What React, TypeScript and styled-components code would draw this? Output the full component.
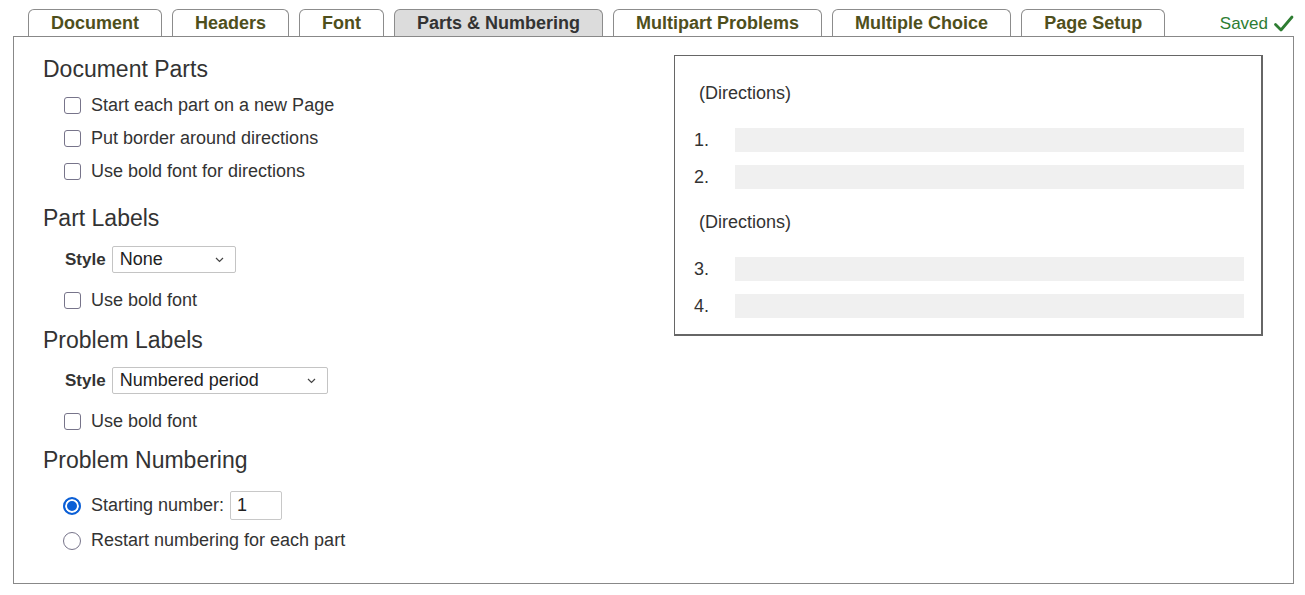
import styled, { createGlobalStyle } from 'styled-components';

const TABS = [
  'Document',
  'Headers',
  'Font',
  'Parts & Numbering',
  'Multipart Problems',
  'Multiple Choice',
  'Page Setup',
];
const ACTIVE_TAB = 'Parts & Numbering';

const PREVIEW = [
  { directions: '(Directions)', items: ['1.', '2.'] },
  { directions: '(Directions)', items: ['3.', '4.'] },
];

const GlobalStyle = createGlobalStyle`
  body {
    margin: 0;
    background: #fff;
    font-family: "Liberation Sans", Arial, sans-serif;
    color: #333;
  }
`;

const App = () => (
  <>
    <GlobalStyle />
    <Page>
      <TabBar>
        {TABS.map((tab) => (
          <Tab key={tab} $active={tab === ACTIVE_TAB}>
            {tab}
          </Tab>
        ))}
        <Saved>
          Saved
          <svg width="21" height="19" viewBox="0 0 21 19">
            <path d="M2.5 10.5 L8 16 L19 3" fill="none" stroke="#2e7d32" strokeWidth="2.8" strokeLinecap="round" strokeLinejoin="round" />
          </svg>
        </Saved>
      </TabBar>
      <Panel>
        <Settings>
          <Heading>Document Parts</Heading>
          <CheckRow>
            <Checkbox type="checkbox" />
            Start each part on a new Page
          </CheckRow>
          <CheckRow>
            <Checkbox type="checkbox" />
            Put border around directions
          </CheckRow>
          <CheckRow>
            <Checkbox type="checkbox" />
            Use bold font for directions
          </CheckRow>

          <Heading $top={15} $bottom={10}>Part Labels</Heading>
          <FieldRow>
            <FieldLabel>Style</FieldLabel>
            <Select $width={124}>
              <span>None</span>
              <Chevron />
            </Select>
          </FieldRow>
          <CheckRow>
            <Checkbox type="checkbox" />
            Use bold font
          </CheckRow>

          <Heading $top={8} $bottom={9}>Problem Labels</Heading>
          <FieldRow>
            <FieldLabel>Style</FieldLabel>
            <Select $width={216}>
              <span>Numbered period</span>
              <Chevron />
            </Select>
          </FieldRow>
          <CheckRow>
            <Checkbox type="checkbox" />
            Use bold font
          </CheckRow>

          <Heading $top={7} $bottom={13}>Problem Numbering</Heading>
          <RadioRow>
            <Radio type="radio" name="numbering" defaultChecked />
            Starting number:
            <NumberInput defaultValue="1" />
          </RadioRow>
          <RadioRow>
            <Radio type="radio" name="numbering" />
            Restart numbering for each part
          </RadioRow>
        </Settings>

        <Preview>
          {PREVIEW.map((part, i) => (
            <PreviewPart key={i} $first={i === 0}>
              <Directions>{part.directions}</Directions>
              {part.items.map((n) => (
                <ProblemLine key={n}>
                  <ProblemNumber>{n}</ProblemNumber>
                  <ProblemBar />
                </ProblemLine>
              ))}
            </PreviewPart>
          ))}
        </Preview>
      </Panel>
    </Page>
  </>
);
export default App;

const Chevron = () => (
  <svg width="9" height="6" viewBox="0 0 9 6">
    <path d="M1 1 L4.5 4.5 L8 1" fill="none" stroke="#444" strokeWidth="1.2" />
  </svg>
);

const Page = styled.div`
  padding: 9px 11px 0 13px;
  width: 1281px;
`;

const TabBar = styled.div`
  display: flex;
  align-items: flex-end;
  gap: 10px;
  padding-left: 15px;
  height: 27px;
`;

const Tab = styled.div<{ $active?: boolean }>`
  height: 26px;
  padding: 0 22px;
  display: flex;
  align-items: center;
  border: 1px solid #8c8c8c;
  border-bottom: none;
  border-radius: 6px 6px 0 0;
  background: ${({ $active }) => ($active ? '#dcdcdc' : '#fff')};
  color: ${({ $active }) => ($active ? '#333' : '#4f4f1c')};
  font-size: 18px;
  font-weight: 700;
  white-space: nowrap;
`;

const Saved = styled.div`
  margin-left: auto;
  align-self: center;
  display: flex;
  align-items: center;
  gap: 5px;
  color: #2e7d32;
  font-size: 17px;
  margin-top: 2px;
`;

const Panel = styled.div`
  display: flex;
  border: 1px solid #888;
  box-sizing: border-box;
  height: 548px;
`;

const Settings = styled.div`
  width: 631px;
  padding: 17px 0 0 29px;
`;

const Heading = styled.h2<{ $top?: number; $bottom?: number }>`
  margin: ${({ $top = 0 }) => $top}px 0 ${({ $bottom = 5 }) => $bottom}px;
  height: 30px;
  line-height: 30px;
  font-size: 23px;
  font-weight: 400;
  color: #333;
`;

const CheckRow = styled.label`
  display: flex;
  align-items: center;
  gap: 10px;
  height: 33px;
  padding-left: 21px;
  font-size: 18px;
  color: #333;
`;

const Checkbox = styled.input`
  appearance: none;
  margin: 0;
  width: 17px;
  height: 17px;
  border: 1px solid #77748a;
  border-radius: 3px;
  background: #fff;
`;

const FieldRow = styled.div`
  display: flex;
  align-items: center;
  gap: 6px;
  height: 33px;
  padding-left: 22px;
  margin-bottom: 8px;
`;

const FieldLabel = styled.span`
  font-size: 17px;
  font-weight: 700;
  color: #333;
`;

const Select = styled.div<{ $width: number }>`
  width: ${({ $width }) => $width}px;
  height: 27px;
  box-sizing: border-box;
  display: flex;
  align-items: center;
  justify-content: space-between;
  padding: 0 11px 0 7px;
  border: 1px solid #c4c4c4;
  border-radius: 2px;
  font-size: 18px;
  color: #222;
`;

const RadioRow = styled(CheckRow)`
  height: 35px;
  gap: 10px;
  padding-left: 20px;
`;

const Radio = styled.input`
  appearance: none;
  margin: 0;
  width: 18px;
  height: 18px;
  border-radius: 50%;
  border: 1px solid #77748a;
  box-sizing: border-box;
  background: #fff;

  &:checked {
    border: 2px solid #0b5fd6;
    background: #0b5fd6;
    box-shadow: inset 0 0 0 2px #fff;
  }
`;

const NumberInput = styled.input`
  margin-left: -4px;
  width: 52px;
  height: 29px;
  box-sizing: border-box;
  padding: 0 6px;
  border: 1px solid #c8c8c8;
  border-radius: 2px;
  font-family: inherit;
  font-size: 18px;
  color: #222;
`;

const Preview = styled.div`
  margin-top: 18px;
  width: 589px;
  height: 281px;
  box-sizing: border-box;
  padding: 22px 17px 0 19px;
  border: 1px solid #666;
  border-right-width: 2px;
  border-bottom-width: 2px;
`;

const PreviewPart = styled.div<{ $first?: boolean }>`
  margin-top: ${({ $first }) => ($first ? 0 : 18)}px;
  display: flex;
  flex-direction: column;
  gap: 13px;
`;

const Directions = styled.div`
  height: 30px;
  line-height: 30px;
  padding-left: 5px;
  margin-bottom: 7px;
  font-size: 18px;
  color: #333;
`;

const ProblemLine = styled.div`
  display: flex;
  align-items: center;
  height: 24px;
`;

const ProblemNumber = styled.span`
  width: 41px;
  font-size: 18px;
  color: #333;
`;

const ProblemBar = styled.div`
  flex: 1;
  height: 24px;
  background: #f0f0f0;
`;
